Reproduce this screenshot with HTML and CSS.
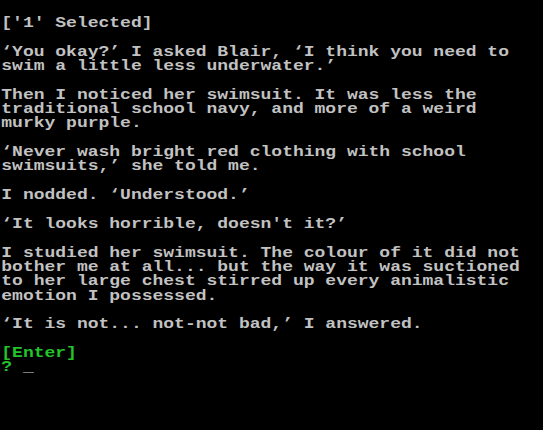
FILE: index.html
```html
<!DOCTYPE html>
<html>
<head>
<meta charset="utf-8">
<link rel="stylesheet" href="styles.css">
</head>
<body>
<div class="screen">
<pre class="term">['1' Selected]

‘You okay?’ I asked Blair, ‘I think you need to
swim a little less underwater.’

Then I noticed her swimsuit. It was less the
traditional school navy, and more of a weird
murky purple.

‘Never wash bright red clothing with school
swimsuits,’ she told me.

I nodded. ‘Understood.’

‘It looks horrible, doesn't it?’

I studied her swimsuit. The colour of it did not
bother me at all... but the way it was suctioned
to her large chest stirred up every animalistic
emotion I possessed.

‘It is not... not-not bad,’ I answered.

<span class="green">[Enter]</span>
<span class="green">?</span> <span class="cursor">_</span></pre>
</div>
</body>
</html>
```
FILE: styles.css
```css
html, body {
  margin: 0;
  padding: 0;
  background: #000;
}
.screen {
  width: 543px;
  height: 430px;
  overflow: hidden;
  background: #000;
}
.term {
  margin: 0;
  padding: 16px 0 0 1px;
  font-family: "Liberation Mono", "Courier New", monospace;
  font-size: 14px;
  font-weight: bold;
  line-height: 14.35px;
  color: #c2c2c2;
  white-space: pre;
  transform: scaleX(1.2857);
  transform-origin: 0 0;
}
.green {
  color: #22c42a;
}
.cursor {
  color: #d0d0d0;
}
```
